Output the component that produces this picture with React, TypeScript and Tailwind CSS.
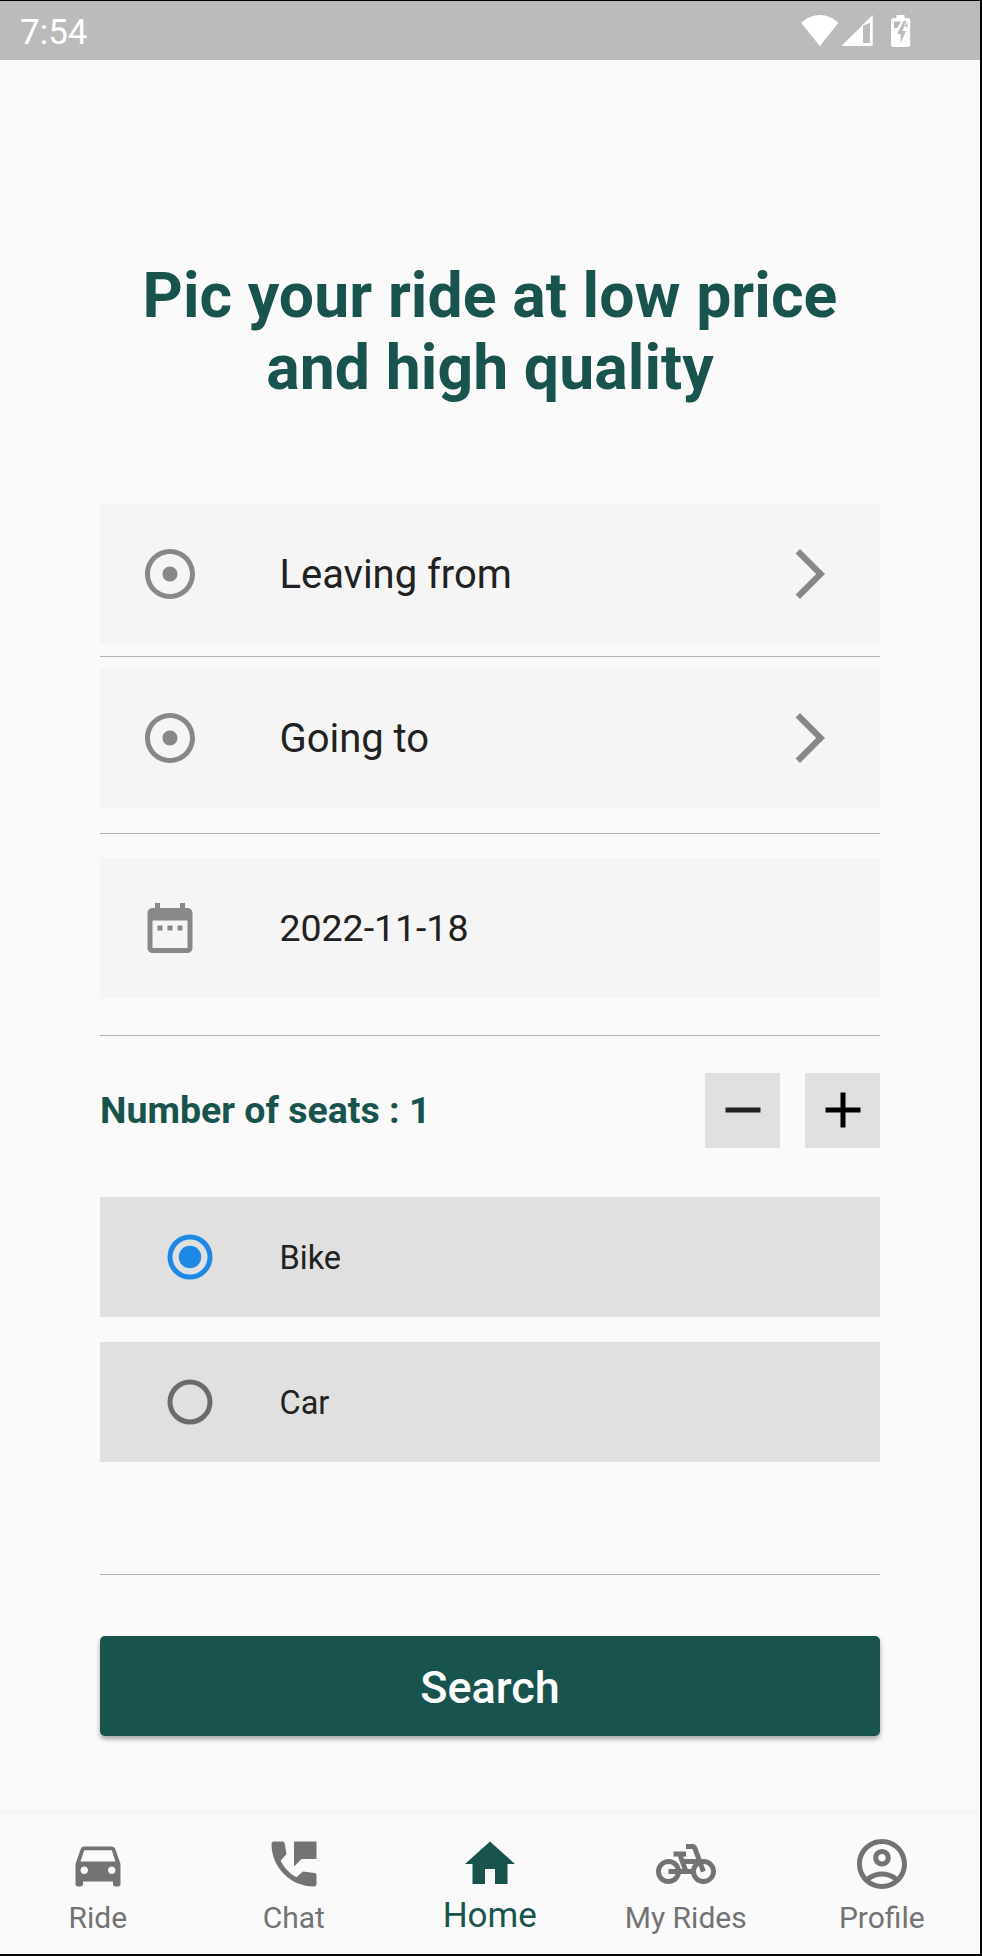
import React, { useState } from "react";

const ICONS = {
  adjust:
    "M12 2C6.49 2 2 6.49 2 12s4.49 10 10 10 10-4.49 10-10S17.51 2 12 2zm0 18c-4.41 0-8-3.59-8-8s3.59-8 8-8 8 3.59 8 8-3.59 8-8 8zm3-8c0 1.66-1.34 3-3 3s-3-1.34-3-3 1.34-3 3-3 3 1.34 3 3z",
  forward: "M6.23 20.23L8 22l10-10L8 2 6.23 3.77 14.46 12z",
  calendar:
    "M9 11H7v2h2v-2zm4 0h-2v2h2v-2zm4 0h-2v2h2v-2zm2-7h-1V2h-2v2H8V2H6v2H5c-1.11 0-1.99.9-1.99 2L3 20c0 1.1.89 2 2 2h14c1.1 0 2-.9 2-2V6c0-1.1-.9-2-2-2zm0 16H5V9h14v11z",
  minus: "M19 13H5v-2h14v2z",
  plus: "M19 13h-6v6h-2v-6H5v-2h6V5h2v6h6v2z",
  car: "M18.92 6.01C18.72 5.42 18.16 5 17.5 5h-11c-.66 0-1.21.42-1.42 1.01L3 12v8c0 .55.45 1 1 1h1c.55 0 1-.45 1-1v-1h12v1c0 .55.45 1 1 1h1c.55 0 1-.45 1-1v-8l-2.08-5.99zM6.5 16c-.83 0-1.5-.67-1.5-1.5S5.67 13 6.5 13s1.5.67 1.5 1.5S7.33 16 6.5 16zm11 0c-.83 0-1.5-.67-1.5-1.5s.67-1.5 1.5-1.5 1.5.67 1.5 1.5-.67 1.5-1.5 1.5zM5 11l1.5-4.5h11L19 11H5z",
  chat: "M12 3v10l3-3h6V3h-9z M4 3h3.4c.5 0 .8.3.87.8L9 8 6.65 10.7c1.44 2.83 3.6 5.2 6.35 6.6L15.5 15l4.7.55c.5.06.8.4.8.9V20c0 .55-.45 1-1 1C10.6 21 3 13.4 3 4c0-.55.45-1 1-1z",
  home: "M10 20v-6h4v6h5v-8h3L12 3 2 12h3v8z",
  bike: "M18.18 10l-1.7-4.68C16.19 4.53 15.44 4 14.6 4H12v2h2.6l1.46 4h-4.81l-.36-1H12V7H7v2h1.75l1.82 5H9.9c-.44-2.23-2.31-3.88-4.65-3.99C2.45 9.87 0 12.2 0 15s2.2 5 5 5c2.46 0 4.45-1.69 4.9-4h4.2c.44 2.23 2.31 3.88 4.65 3.99 2.8.13 5.25-2.19 5.25-5 0-2.8-2.2-5-5-5h-.82zM7.82 16c-.4 1.17-1.49 2-2.82 2-1.68 0-3-1.32-3-3s1.32-3 3-3c1.33 0 2.42.83 2.82 2H5v2h2.82zm6.28-2h-1.4l-.73-2H15c-.44.58-.76 1.25-.9 2zm4.9 4c-1.68 0-3-1.32-3-3 0-.93.41-1.73 1.05-2.28l.96 2.64 1.88-.68-.97-2.67c.03 0 .06-.01.08-.01 1.68 0 3 1.32 3 3s-1.32 3-3 3z",
  profile:
    "M12 2C6.48 2 2 6.48 2 12s4.48 10 10 10 10-4.48 10-10S17.52 2 12 2zM7.35 18.5C8.66 17.56 10.26 17 12 17s3.34.56 4.65 1.5c-1.31.94-2.91 1.5-4.65 1.5s-3.34-.56-4.65-1.5zm10.79-1.38C16.45 15.8 14.32 15 12 15s-4.45.8-6.14 2.12C4.7 15.73 4 13.95 4 12c0-4.42 3.58-8 8-8s8 3.58 8 8c0 1.95-.7 3.73-1.86 5.12zM12 6c-1.93 0-3.5 1.57-3.5 3.5S10.07 13 12 13s3.5-1.57 3.5-3.5S13.93 6 12 6zm0 5c-.83 0-1.5-.67-1.5-1.5S11.17 8 12 8s1.5.67 1.5 1.5S12.83 11 12 11z",
};

function Icon({ name, className = "" }: { name: keyof typeof ICONS; className?: string }) {
  return (
    <svg viewBox="0 0 24 24" className={`size-[60px] shrink-0 ${className}`} fill="currentColor" aria-hidden>
      <path d={ICONS[name]} />
    </svg>
  );
}

function StatusBar() {
  return (
    <header className="flex h-[60px] shrink-0 items-center justify-between border-t border-black bg-[#bbbbbb] pr-[69px] pl-5 text-white">
      <span className="pt-[3px] text-[35px] leading-none">7:54</span>
      <svg width="111" height="36" viewBox="0 0 111 36" fill="currentColor" aria-hidden>
        <path d="M1.3 10C6 5 13 2 19.8 2s13.8 3 18.5 8L19.8 33z" />
        <path fillRule="evenodd" d="M72.7 2v31H41.5zM70 9.5L63 13V30h7z" />
        <path
          fillRule="evenodd"
          d="M96.5 2h8v3h3.2q2.5 0 2.5 2.500V31.500q0 2.500-2.500 2.500H93.500q-2.500 0-2.500-2.500V7.500Q91 5 93.500 5h3zM103.500 8l-6.500 13h3.500v9l5.500-12h-3.500l4-10zM94 8.500V15h3.500L101 8.500zM105 14h2.500V8.500z"
        />
      </svg>
    </header>
  );
}

function Field({
  icon,
  label,
  textClass,
  arrow = false,
}: {
  icon: keyof typeof ICONS;
  label: string;
  textClass: string;
  arrow?: boolean;
}) {
  return (
    <button className="flex h-[139.5px] w-full items-center bg-[#f5f5f5] pr-10 pl-[39.5px] text-left text-[#888888]">
      <Icon name={icon} />
      <span className={`ml-20 flex-1 text-[#212121] ${textClass}`}>{label}</span>
      {arrow && <Icon name="forward" />}
    </button>
  );
}

function Divider({ className }: { className: string }) {
  return <div className={`h-px shrink-0 bg-[#b5b5b5] ${className}`} />;
}

function StepButton({ icon, onClick, className }: { icon: "minus" | "plus"; onClick: () => void; className: string }) {
  return (
    <button onClick={onClick} className={`flex size-[75px] items-center justify-center bg-[#e0e0e0] ${className}`}>
      <Icon name={icon} />
    </button>
  );
}

function Option({ label, checked, onSelect }: { label: string; checked: boolean; onSelect: () => void }) {
  return (
    <button onClick={onSelect} className="flex h-[119.75px] w-full items-center bg-[#e0e0e0] pl-[59.5px] text-left">
      <svg viewBox="0 0 24 24" className={`size-[60px] ${checked ? "text-[#1e88e5]" : "text-[#6b6b6b]"}`} aria-hidden>
        <circle cx="12" cy="12" r="8" fill="none" stroke="currentColor" strokeWidth="2" />
        {checked && <circle cx="12" cy="12" r="4.5" fill="currentColor" />}
      </svg>
      <span className="ml-[60px] pt-[2px] text-[32.5px] leading-none text-[#212121]">{label}</span>
    </button>
  );
}

const TABS: { icon: keyof typeof ICONS; label: string }[] = [
  { icon: "car", label: "Ride" },
  { icon: "chat", label: "Chat" },
  { icon: "home", label: "Home" },
  { icon: "bike", label: "My Rides" },
  { icon: "profile", label: "Profile" },
];

export default function App() {
  const [seats, setSeats] = useState(1);
  const [vehicle, setVehicle] = useState("Bike");
  const [tab, setTab] = useState("Home");

  return (
    <div className="flex h-[1956px] w-[982px] flex-col border-r-2 border-b-2 border-black bg-[#fafafa] font-[Roboto,sans-serif]">
      <StatusBar />
      <main className="flex flex-1 flex-col px-[100px]">
        <h1 className="mt-[200px] text-center text-[62.5px] leading-[72px] font-bold tracking-[0.08px] text-[#18544d]">
          Pic your ride at low price
          <br />
          and high quality
        </h1>
        <div className="mt-[100px]">
          <Field icon="adjust" label="Leaving from" textClass="pt-[2px] text-[40px] leading-none tracking-[-0.04px]" arrow />
        </div>
        <Divider className="mt-[12.5px] mb-[11.5px]" />
        <Field icon="adjust" label="Going to" textClass="pt-[2px] text-[40px] leading-none tracking-[-0.04px]" arrow />
        <Divider className="mt-[25px] mb-6" />
        <Field icon="calendar" label="2022-11-18" textClass="pt-[2px] text-[37.5px] leading-none tracking-[-0.04px]" />
        <Divider className="mt-[37.5px] mb-[36.5px]" />
        <div className="flex items-center">
          <span className="flex-1 pt-[2px] text-[37.5px] leading-none font-bold text-[#18544d]">
            Number of seats : {seats}
          </span>
          <StepButton icon="minus" onClick={() => setSeats(Math.max(1, seats - 1))} className="text-[#212121]" />
          <StepButton icon="plus" onClick={() => setSeats(seats + 1)} className="ml-[25px] text-black" />
        </div>
        <div className="mt-[49.75px] flex flex-col gap-[25.25px]">
          {["Bike", "Car"].map((v) => (
            <Option key={v} label={v} checked={vehicle === v} onSelect={() => setVehicle(v)} />
          ))}
        </div>
        <Divider className="mt-[112px] mb-[61px]" />
        <button className="flex h-[100px] shrink-0 items-center justify-center rounded-[5px] bg-[#18544d] pt-[2px] text-[45px] leading-none font-medium text-white shadow-[0_3px_5px_rgba(0,0,0,0.35)]">
          Search
        </button>
      </main>
      <nav className="grid h-[140px] shrink-0 grid-cols-5 bg-[#fafafa] shadow-[0_-1px_8px_rgba(0,0,0,0.06)]">
        {TABS.map(({ icon, label }) => (
          <button
            key={label}
            onClick={() => setTab(label)}
            className={`flex flex-col items-center pt-5 pr-[0.5px] ${tab === label ? "text-[#18544d]" : "text-[#737373]"}`}
          >
            <Icon name={icon} />
            <span className={`leading-10 ${tab === label ? "mt-[2px] text-[35px]" : "mt-1 text-[30px]"}`}>{label}</span>
          </button>
        ))}
      </nav>
    </div>
  );
}
